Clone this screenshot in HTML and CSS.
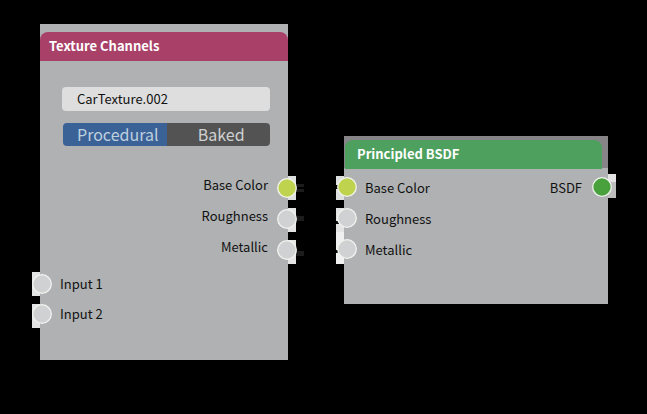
FILE: index.html
```html
<!DOCTYPE html>
<html lang="en">
<head>
<meta charset="utf-8">
<meta name="viewport" content="width=device-width, initial-scale=1">
<title>Node editor</title>
<link rel="stylesheet" href="styles.css">
</head>
<body>
<svg class="defs" aria-hidden="true">
  <symbol id="socket" viewBox="0 0 40 30">
    <circle cx="20" cy="15" r="9.3" stroke="#f1f3ef" stroke-width="1.3"/>
  </symbol>
</svg>
<main class="canvas">
  <section class="node node-texture">
    <h2 class="title">Texture Channels</h2>
    <div class="controls">
      <input class="name" type="text" value="CarTexture.002" aria-label="Texture name">
      <div class="modes">
        <button class="mode active" type="button">Procedural</button>
        <button class="mode" type="button">Baked</button>
      </div>
    </div>
    <ul class="ports outputs">
      <li class="port"><span>Base Color</span>
        <svg class="socket right yellow" viewBox="0 0 40 30"><path fill="#dedfdf" d="M21 3h8v24h-8z"/><path fill="#1c1c1c" d="M29 11h8v3h-8zm0 5h8v3h-8z"/><use href="#socket"/></svg></li>
      <li class="port"><span>Roughness</span>
        <svg class="socket right gray" viewBox="0 0 40 30"><path fill="#e4e4e4" d="M21 4h8v24h-8z"/><path fill="#1c1c1c" d="M29 12h8v5h-8z"/><use href="#socket"/></svg></li>
      <li class="port"><span>Metallic</span>
        <svg class="socket right gray" viewBox="0 0 40 30"><path fill="#e4e4e4" d="M21 5h8v24h-8z"/><path fill="#1c1c1c" d="M29 16h8v5h-8z"/><use href="#socket"/></svg></li>
    </ul>
    <ul class="ports inputs">
      <li class="port"><svg class="socket left gray" viewBox="0 0 40 30"><path fill="#e4e4e4" d="M10 3h8v24h-8z"/><use href="#socket"/></svg>
        <span>Input 1</span></li>
      <li class="port"><svg class="socket left gray" viewBox="0 0 40 30"><path fill="#e4e4e4" d="M10 5h8v24h-8z"/><use href="#socket"/></svg>
        <span>Input 2</span></li>
    </ul>
  </section>

  <section class="node node-bsdf">
    <h2 class="title">Principled BSDF</h2>
    <ul class="ports">
      <li class="port"><svg class="socket left yellow" viewBox="0 0 40 30"><path fill="#dedfdf" d="M9 4h8v24H9z"/><path fill="#080808" d="M9 13h3v4H9z"/><use href="#socket"/></svg>
        <span>Base Color</span><span class="result">BSDF</span>
        <svg class="socket right green" viewBox="0 0 40 30"><path fill="#e4e4e4" d="M26 2h8v8h-8z"/><path fill="#bdbdbd" d="M26 10h8v16h-8z"/><use href="#socket"/></svg></li>
      <li class="port"><svg class="socket left gray" viewBox="0 0 40 30"><path fill="#e4e4e4" d="M9 5h8v24H9z"/><path fill="#080808" d="M9 18h3v3H9z"/><use href="#socket"/></svg>
        <span>Roughness</span></li>
      <li class="port"><svg class="socket left gray" viewBox="0 0 40 30"><path fill="#f0f0f0" d="M9-2h8v32H9z"/><path fill="#080808" d="M9 16h3v3H9z"/><use href="#socket"/></svg>
        <span>Metallic</span></li>
    </ul>
  </section>
</main>
</body>
</html>
```

FILE: styles.css
```css
* { box-sizing: border-box; }

body {
  margin: 0;
  background: #000;
  color: #111;
  font: 13px/20px "Noto Sans CJK SC", "Noto Sans", sans-serif;
}

.defs { position: absolute; width: 0; height: 0; }

.canvas { position: relative; min-height: 100vh; }

.node { position: absolute; background: #afb1b3; }

.node-texture {
  left: 40px;
  top: 24px;
  width: 248px;
  padding: 8px 0 31px;
}

.node-bsdf {
  left: 344px;
  top: 136px;
  width: 264px;
  padding: 4px 6px 39px 1px;
  background: linear-gradient(#868486 32px, #afb1b3 32px);
}

.title {
  margin: 0;
  padding: 0 9px 2px;
  border-radius: 8px 8px 0 0;
  color: #fff;
  font-size: 13px;
  font-weight: 700;
  line-height: 27px;
}

.node-texture .title { background: #a84068; }
.node-bsdf .title { padding: 0 12px 2px; background: #4da05d; }

.controls {
  display: grid;
  gap: 12px;
  padding: 26px 18px 23px 22px;
}

.name {
  width: 100%;
  height: 24px;
  padding: 0 15px 2px;
  border: 0;
  border-radius: 4px;
  background: #dedede;
  color: #111;
  font: inherit;
}

.modes {
  display: flex;
  margin-left: 1px;
  border-radius: 4px;
  overflow: hidden;
}

.mode {
  flex: 1;
  height: 23px;
  padding: 0 0 0 6px;
  border: 0;
  background: #535353;
  color: #cfd1d2;
  font: inherit;
  font-size: 16px;
  line-height: 23px;
}

.mode.active { background: #3b6297; color: #bfd0df; }

.ports { margin: 0; padding: 0; list-style: none; }
.node-bsdf .ports { padding-top: 3px; }
.inputs { padding-top: 7px; }

.port {
  position: relative;
  display: flex;
  align-items: center;
  height: 31px;
  padding: 0 20px;
}

.outputs .port { justify-content: flex-end; }
.inputs .port { height: 30px; }
.result { margin-left: auto; }

.socket { position: absolute; top: 0; width: 40px; height: 30px; overflow: visible; }
.outputs .socket { top: 4px; }
.left { left: -18px; }
.right { right: -19px; }
.node-bsdf .right { right: -20px; }

.yellow { fill: #bfd34f; }
.gray { fill: #d0d1d2; }
.green { fill: #48a13c; }
```
